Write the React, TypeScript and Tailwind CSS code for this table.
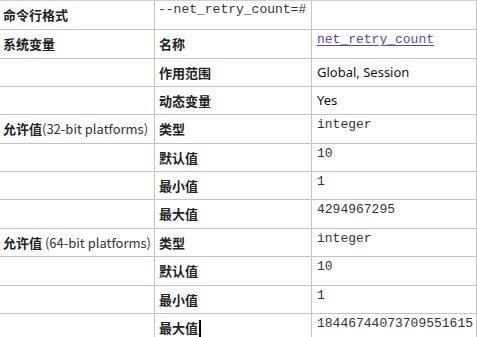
import React from 'react';

type Cell = { text: string; kind: 'mono' | 'sans' | 'link' | 'none' };

interface Row {
    group: string;
    label: string;
    value: Cell;
    h: string;
    caret?: boolean;
}

const rows: Row[] = [
    { group: '命令行格式', label: '', value: { text: '', kind: 'none' }, h: 'h-[29px]' },
    { group: '系统变量', label: '名称', value: { text: 'net_retry_count', kind: 'link' }, h: 'h-[29px]' },
    { group: '', label: '作用范围', value: { text: 'Global, Session', kind: 'sans' }, h: 'h-[28px]' },
    { group: '', label: '动态变量', value: { text: 'Yes', kind: 'sans' }, h: 'h-[28px]' },
    { group: '允许值(32-bit platforms)', label: '类型', value: { text: 'integer', kind: 'mono' }, h: 'h-[29px]' },
    { group: '', label: '默认值', value: { text: '10', kind: 'mono' }, h: 'h-[28px]' },
    { group: '', label: '最小值', value: { text: '1', kind: 'mono' }, h: 'h-[28px]' },
    { group: '', label: '最大值', value: { text: '4294967295', kind: 'mono' }, h: 'h-[29px]' },
    { group: '允许值 (64-bit platforms)', label: '类型', value: { text: 'integer', kind: 'mono' }, h: 'h-[28px]' },
    { group: '', label: '默认值', value: { text: '10', kind: 'mono' }, h: 'h-[29px]' },
    { group: '', label: '最小值', value: { text: '1', kind: 'mono' }, h: 'h-[28px]' },
    { group: '', label: '最大值', value: { text: '18446744073709551615', kind: 'mono' }, h: 'h-[28px]', caret: true },
];

function GroupLabel({ text }: { text: string }) {
    // CJK part bold, the latin bracket part regular
    const m = text.match(/^([^\s(]+)(.*)$/);
    if (!m) return null;
    return (
        <span className="whitespace-nowrap">
            <span className="font-bold text-[#222]">{m[1]}</span>
            <span className="font-normal">{m[2]}</span>
        </span>
    );
}

function ValueCell({ cell }: { cell: Cell }) {
    if (cell.kind === 'mono') {
        return (
            <div className="pl-[5px] pt-[2px] leading-[16px] text-[13px] text-[#333] font-['Liberation_Mono',monospace]">
                {cell.text}
            </div>
        );
    }
    if (cell.kind === 'link') {
        return (
            <div className="pl-[5px] pt-[2px] leading-[16px] text-[13px] font-['Liberation_Mono',monospace]">
                <a href="#" className="text-[#5e45a0] underline underline-offset-2 decoration-[#5e45a0]">
                    {cell.text}
                </a>
            </div>
        );
    }
    if (cell.kind === 'sans') {
        return (
            <div className="h-full flex items-center pl-[5px] text-[13px] text-[#111] font-['Noto_Sans','Noto_Sans_CJK_SC',sans-serif]">
                {cell.text}
            </div>
        );
    }
    return null;
}

export default function App() {
    return (
        <div className="w-[477px] h-[337px] overflow-hidden bg-white font-['Noto_Sans_CJK_SC','Noto_Sans',sans-serif] text-[13px] text-[#333]">
            <div className="border-t border-[#d0d0d0]">
                {rows.map((r, i) => (
                    <div
                        key={i}
                        className={`grid grid-cols-[155px_157px_1fr] border-b border-[#c4c4c4] box-border ${r.h}`}
                    >
                        <div className="border-r border-[#c4c4c4] flex items-center pl-[3px]">
                            {r.group && <GroupLabel text={r.group} />}
                        </div>
                        <div className="border-r border-[#c4c4c4] relative">
                            {r.group === '命令行格式' ? (
                                <div className="pl-[3px] pt-[1px] leading-[16px] text-[13px] text-[#333] font-['Liberation_Mono',monospace] whitespace-nowrap">
                                    --net_retry_count=#
                                </div>
                            ) : (
                                <div className="h-full flex items-center pl-[4px] font-bold text-[#222]">
                                    {r.label}
                                    {r.caret && <span className="inline-block w-[1.5px] h-[22px] bg-black ml-[1px] mt-[6px]" />}
                                </div>
                            )}
                        </div>
                        <div className="border-r border-[#c4c4c4]">
                            <ValueCell cell={r.value} />
                        </div>
                    </div>
                ))}
            </div>
        </div>
    );
}
